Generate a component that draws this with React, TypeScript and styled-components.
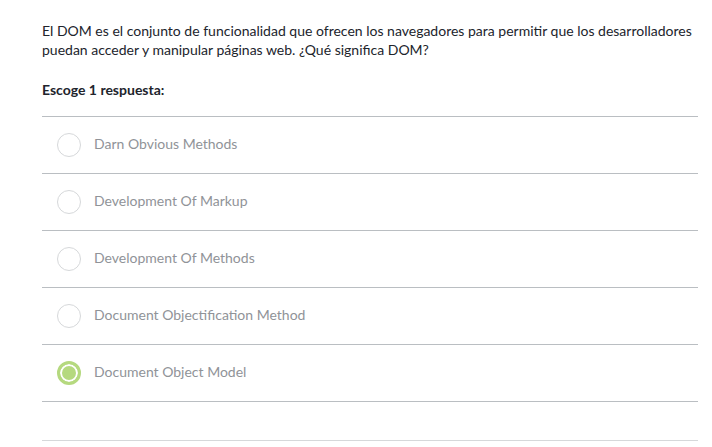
import React from "react";
import styled, { createGlobalStyle } from "styled-components";

const Global = createGlobalStyle`
  html, body { margin: 0; padding: 0; background: #fff; }
  body { font-family: Lato, "Open Sans", sans-serif; }
`;

const Page = styled.div`
  padding: 21px 14px 0 42px;
  width: 712px;
  box-sizing: border-box;
`;

const Question = styled.p`
  margin: 0;
  font-size: 14px;
  line-height: 19px;
  color: #21242c;
  width: 656px;
`;

const Prompt = styled.div`
  margin-top: 21px;
  font-size: 14px;
  font-weight: 700;
  line-height: 19px;
  color: #21242c;
`;

const List = styled.div`
  margin-top: 17px;
  border-top: 1px solid #babec2;
  width: 656px;
`;

const Option = styled.div`
  display: flex;
  align-items: center;
  gap: 13px;
  height: 56px;
  padding-left: 15px;
  border-bottom: 1px solid #babec2;
  font-size: 14px;
  color: #909398;
`;

const Label = styled.span`
  line-height: 16px;
  padding-bottom: 3px;
`;

const Radio = styled.span<{ $checked?: boolean }>`
  box-sizing: border-box;
  width: 24px;
  height: 24px;
  border-radius: 50%;
  border: ${(p) => (p.$checked ? "3px solid #b5d97f" : "1px solid #d6d8da")};
  background: ${(p) => (p.$checked ? "#b5d97f" : "#fff")};
  box-shadow: ${(p) => (p.$checked ? "inset 0 0 0 2px #fff" : "none")};
  flex-shrink: 0;
`;

const Spacer = styled.div`
  height: 38px;
  border-bottom: 1px solid #d6d8da;
  width: 656px;
`;

const options = [
  "Darn Obvious Methods",
  "Development Of Markup",
  "Development Of Methods",
  "Document Objectification Method",
  "Document Object Model",
];

export default function App() {
  return (
    <>
      <Global />
      <Page>
        <Question>
          El DOM es el conjunto de funcionalidad que ofrecen los navegadores para permitir que los desarrolladores
          puedan acceder y manipular páginas web. ¿Qué significa DOM?
        </Question>
        <Prompt>Escoge 1 respuesta:</Prompt>
        <List>
          {options.map((o, i) => (
            <Option key={o}>
              <Radio $checked={i === 4} />
              <Label>{o}</Label>
            </Option>
          ))}
        </List>
        <Spacer />
      </Page>
    </>
  );
}
